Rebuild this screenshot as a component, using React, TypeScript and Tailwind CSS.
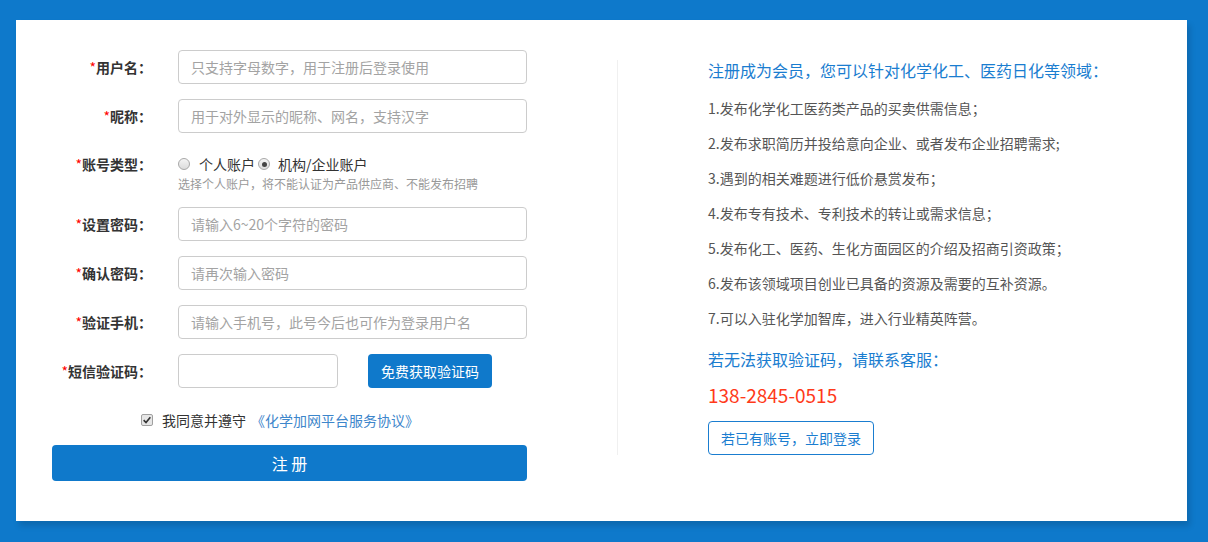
const font = { fontFamily: '"Microsoft YaHei", "Noto Sans CJK SC", sans-serif' };

const Radio = ({ checked }: { checked?: boolean }) => (
  <span className="flex h-[12px] w-[12px] items-center justify-center rounded-full border border-[#a8a8a8] bg-gradient-to-b from-[#f4f4f4] to-[#dcdcdc]">
    {checked && <span className="h-[5px] w-[5px] rounded-full bg-[#444]" />}
  </span>
);

const Label = ({ text }: { text: string }) => (
  <label className="w-[100px] shrink-0 text-right text-[14px] font-bold leading-5 text-[#333]">
    <span className="font-normal text-[#f00]">*</span>
    {text}：
  </label>
);

const Field = ({ label, placeholder }: { label: string; placeholder: string }) => (
  <div className="flex items-center">
    <Label text={label} />
    <input
      className="ml-[26px] h-[34px] w-[349px] rounded border border-[#ccc] px-[12px] text-[14px] text-[#333] outline-none placeholder:text-[#a3a3a3]"
      placeholder={placeholder}
    />
  </div>
);

const items = [
  "1.发布化学化工医药类产品的买卖供需信息；",
  "2.发布求职简历并投给意向企业、或者发布企业招聘需求;",
  "3.遇到的相关难题进行低价悬赏发布；",
  "4.发布专有技术、专利技术的转让或需求信息；",
  "5.发布化工、医药、生化方面园区的介绍及招商引资政策；",
  "6.发布该领域项目创业已具备的资源及需要的互补资源。",
  "7.可以入驻化学加智库，进入行业精英阵营。",
];

export default function App() {
  return (
    <div className="h-[542px] w-[1208px] bg-[#0e79cb] pl-[16px] pt-[20px]" style={font}>
      <div className="flex h-[501px] w-[1171px] bg-white shadow-[3px_5px_6px_rgba(0,0,0,0.14)]">
        {/* left: form */}
        <div className="w-[601px] shrink-0 pl-[36px] pt-[30px]">
          <Field label="用户名" placeholder="只支持字母数字，用于注册后登录使用" />
          <div className="mt-[15px]">
            <Field label="昵称" placeholder="用于对外显示的昵称、网名，支持汉字" />
          </div>

          <div className="mt-[21px] flex items-start">
            <Label text="账号类型" />
            <div className="ml-[26px]">
              <div className="flex h-5 items-center text-[14px] text-[#333]">
                <Radio />
                <span className="ml-[9px]">个人账户</span>
                <span className="ml-[3px]">
                  <Radio checked />
                </span>
                <span className="ml-[8px]">机构/企业账户</span>
              </div>
              <p className="mt-[2px] text-[12px] leading-4 text-[#999]">
                选择个人账户，将不能认证为产品供应商、不能发布招聘
              </p>
            </div>
          </div>

          <div className="mt-[15px] flex flex-col gap-[15px]">
            <Field label="设置密码" placeholder="请输入6~20个字符的密码" />
            <Field label="确认密码" placeholder="请再次输入密码" />
            <Field label="验证手机" placeholder="请输入手机号，此号今后也可作为登录用户名" />
            <div className="flex items-center">
              <Label text="短信验证码" />
              <input className="ml-[26px] h-[34px] w-[160px] rounded border border-[#ccc] px-[12px] text-[14px] outline-none" />
              <button className="ml-[30px] h-[34px] w-[124px] rounded bg-[#0f79cb] text-[14px] text-white">
                免费获取验证码
              </button>
            </div>
          </div>

          <div className="mt-[22px] flex h-5 items-center pl-[89px] text-[14px]">
            <span className="flex h-[12px] w-[12px] items-center justify-center rounded-[2px] border border-[#a0a0a0] bg-[#e6e6e6]">
              <svg viewBox="0 0 12 12" className="h-[10px] w-[10px]">
                <path d="M2 6.2 L4.8 9 L10 2.8" fill="none" stroke="#333" strokeWidth="2" />
              </svg>
            </span>
            <span className="ml-[9px] text-[#333]">我同意并遵守</span>
            <span className="ml-[5px] text-[#3d86cb]">《化学加网平台服务协议》</span>
          </div>

          <button className="mt-[15px] h-[36px] w-[475px] rounded bg-[#0f79cb] text-[16px] text-white">
            注 册
          </button>
        </div>

        {/* divider */}
        <div className="mt-[40px] h-[395px] w-px shrink-0 bg-[#f0f0f0]" />

        {/* right: info */}
        <div className="ml-[90px] pt-[38px]">
          <h2 className="text-[16px] leading-6 text-[#1a7dd0]">
            注册成为会员，您可以针对化学化工、医药日化等领域：
          </h2>
          <ul className="mt-[9px]">
            {items.map((t) => (
              <li key={t} className="text-[14px] leading-[35px] text-[#555]">
                {t}
              </li>
            ))}
          </ul>
          <p className="mt-[11px] text-[16px] leading-6 text-[#1a7dd0]">
            若无法获取验证码，请联系客服：
          </p>
          <p className="mt-[10px] text-[19px] leading-7 text-[#ff3a1a]">138-2845-0515</p>
          <button className="mt-[12px] h-[34px] w-[166px] rounded border border-[#1a7dd0] text-[14px] text-[#1a7dd0]">
            若已有账号，立即登录
          </button>
        </div>
      </div>
    </div>
  );
}
